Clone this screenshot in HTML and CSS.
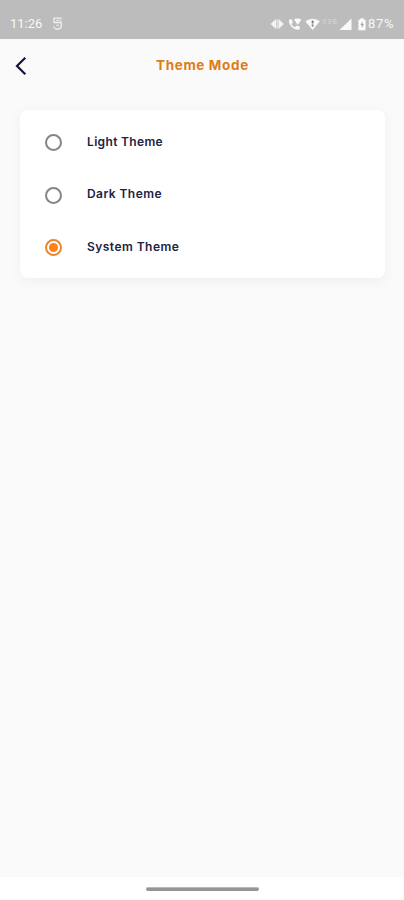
FILE: index.html
```html
<!DOCTYPE html>
<html lang="en">
<head>
<meta charset="utf-8">
<title>Theme Mode</title>
<link rel="stylesheet" href="styles.css">
</head>
<body>
<div class="screen">
  <div class="status">
    <span class="clock">11:26</span>
    <svg class="app" width="11" height="13" viewBox="0 0 11 13" fill="none" stroke="#f0f0f0" stroke-width="1.300"><path d="M9.500 1.200H2v4.300h7.300v3.200Q9.300 12 5.600 12 2 12 1.800 9.500"/><path d="M4 3.300h5.500M4 8.300h3" stroke-width=".9"/></svg>
    <svg class="icons" width="98" height="16" viewBox="0 0 98 16" fill="#fafafa">
      <path d="M6 3 .5 8 6 13zM8.500 3 14 8l-5.500 5z" opacity=".9"/><path d="M6.500 3.500h1.500v9H6.500z" opacity=".6"/>
      <path d="M19 3.500h3l.8 3.200-1.500 1.300q1.200 2.300 3.700 3.300l1.600-1.500 3.200.7v2.800q-4.500 1.300-8-2.300-3.300-3.500-2.800-7.500z"/>
      <path d="M24 3.200q4-1.400 7.500.2L27.700 9z"/>
      <path d="M35.300 5.300q7.300-5.200 14.600 0L42.600 14z"/><path d="M42.600 4.500v3M42.600 8.600v1.800" stroke="#777" stroke-width="1.800"/>
      <g fill="none" stroke="#cfcfcf" stroke-width="1"><path d="m53 3 3 5m0-5-3 5M58 3.500h2.500v4H58m0-2h2.500M63 3.500h3v4h-3zM63 5.500h3"/></g>
      <path d="M81.500 2.500V14H69.500z"/>
      <path d="M90.300 2.300h3.400V3.800h1.900v10.400h-7.200V3.800h1.900z"/><path d="m92.500 5.500-2 3.500h1.300v3l2-3.800h-1.300z" fill="#999"/>
    </svg>
    <span class="battery">87%</span>
  </div>
  <header class="bar">
    <svg class="back" width="12" height="20" viewBox="0 0 12 20" fill="none" stroke="#14143a" stroke-width="2.200"><path d="M10.300 1.700 2 10l8.300 8.300"/></svg>
    <h1>Theme Mode</h1>
  </header>
  <main class="card">
    <div class="option"><span class="radio"></span><span class="label">Light Theme</span></div>
    <div class="option"><span class="radio"></span><span class="label dark">Dark Theme</span></div>
    <div class="option"><span class="radio on"></span><span class="label system">System Theme</span></div>
  </main>
  <footer class="nav"><span class="pill"></span></footer>
</div>
</body>
</html>
```
FILE: styles.css
```css
* { box-sizing: border-box; }
body { margin: 0; font-family: Inter, sans-serif; }
.screen { height: 900px; background: #fafafa; display: flex; flex-direction: column; overflow: hidden; }
.status { height: 39px; background: #bcbcbc; display: flex; align-items: center; padding: 8px 9px 0 10px; color: #f8f8f8; font: 13px Roboto, sans-serif; flex: none; }
.clock { width: 42px; }
.app { display: block; }
.icons { margin-left: auto; display: block; }
.battery { width: 27px; white-space: nowrap; letter-spacing: 0.7px; }
.bar { height: 52px; display: flex; align-items: center; padding-left: 15px; flex: none; }
.back { display: block; margin-top: 2px; }
h1 { margin: 0 0 0 129px; font-size: 13.5px; font-weight: 700; line-height: 20px; color: #e07c14; letter-spacing: 0.64px; white-space: nowrap; }
.card { margin: 19px 19px 0 20px; height: 168px; padding: 6px 25px; border-radius: 8px; background: #fff; box-shadow: 0 3px 12px rgba(90, 120, 110, 0.08); flex: none; }
.option { height: 52.5px; display: flex; align-items: center; }
.radio { width: 17px; height: 17px; border: 2px solid #858585; border-radius: 50%; margin-right: 25px; margin-top: 1px; display: flex; align-items: center; justify-content: center; }
.on { border-color: #ef8428; }
.on::after { content: ""; width: 9px; height: 9px; border-radius: 50%; background: #ff7f19; }
.label { font-size: 12px; font-weight: 600; color: #22223f; line-height: 18px; margin-top: -1px; white-space: nowrap; letter-spacing: 0.34px; }
.dark { letter-spacing: 0.43px; }
.system { letter-spacing: 0.46px; }
.nav { height: 23px; margin-top: auto; background: #fff; display: flex; align-items: center; justify-content: center; flex: none; }
.pill { width: 113px; height: 4px; border-radius: 2px; background: #959595; border-top: 1px solid #b8b8b8; }
```
